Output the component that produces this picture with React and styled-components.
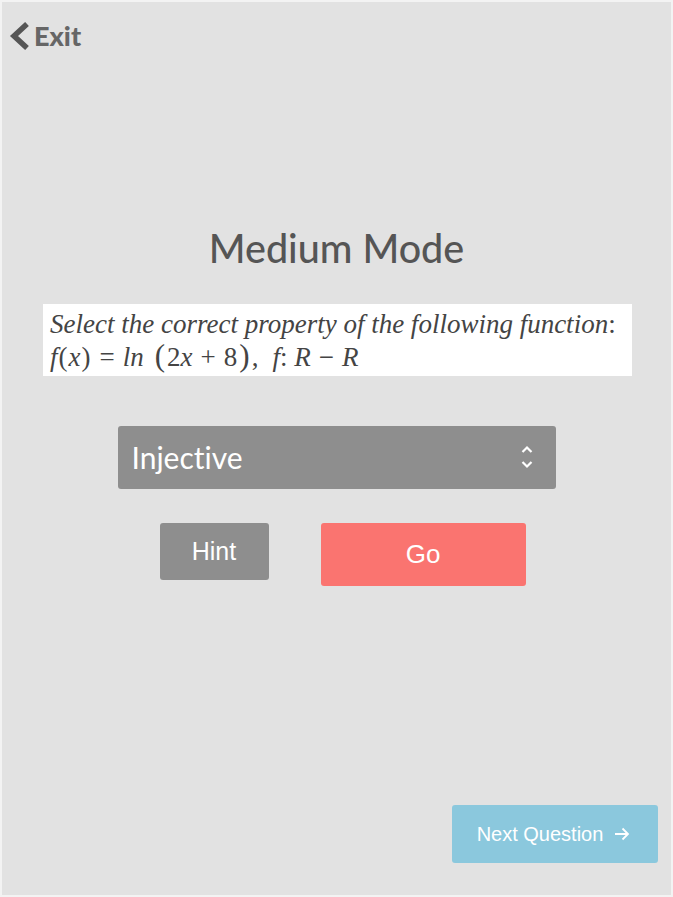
import React from 'react';
import styled, {createGlobalStyle} from 'styled-components';

const GlobalStyle = createGlobalStyle`
  html, body {
    margin: 0;
    padding: 0;
    background: #f3f3f3;
  }
  * {
    box-sizing: border-box;
  }
`;

const ExitIcon = () => (
  <svg width="24" height="28" viewBox="0 0 24 28">
    <path d="M19 2 L6 14 L19 26" fill="none" stroke="#555" strokeWidth="5.5" strokeLinejoin="miter"/>
  </svg>
);

const UpDownIcon = () => (
  <svg width="14" height="26" viewBox="0 0 14 26">
    <path d="M2.5 8 L7 3.5 L11.5 8" fill="none" stroke="white" strokeWidth="2.2"/>
    <path d="M2.5 18 L7 22.5 L11.5 18" fill="none" stroke="white" strokeWidth="2.2"/>
  </svg>
);

const ArrowIcon = () => (
  <svg width="18" height="18" viewBox="0 0 18 18">
    <path d="M2 9 H15 M9.5 3.5 L15 9 L9.5 14.5" fill="none" stroke="white" strokeWidth="1.8"/>
  </svg>
);

const App = () => {
  return (
    <Page>
      <GlobalStyle/>
      <TopBar>
        <ExitLink>
          <ExitIcon/>
          <span>Exit</span>
        </ExitLink>
      </TopBar>

      <Title>Medium Mode</Title>

      <Question>
        <QuestionLine>Select the correct property of the following function<Upright>:</Upright></QuestionLine>
        <QuestionLine>
          f<Paren>(</Paren>x<Paren>)</Paren>
          <Op>=</Op>ln<BigParen $left>(</BigParen><Upright>2</Upright>x<Op>+</Op><Upright>8</Upright><BigParen>)</BigParen><Upright>,</Upright>
          <Space/>f<Upright>: </Upright>R<Op>−</Op>R
        </QuestionLine>
      </Question>

      <SelectBox>
        <span>Injective</span>
        <UpDownIcon/>
      </SelectBox>

      <ButtonRow>
        <HintButton>Hint</HintButton>
        <GoButton>Go</GoButton>
      </ButtonRow>

      <Footer>
        <NextButton>
          Next Question
          <ArrowIcon/>
        </NextButton>
      </Footer>
    </Page>
  );
};

const Page = styled.div`
  margin: 2px;
  height: 893px;
  background: #e2e2e2;
  display: flex;
  flex-direction: column;
  align-items: center;
`;

const TopBar = styled.div`
  align-self: stretch;
  padding: 17px 0 0 6px;
`;

const ExitLink = styled.a`
  display: inline-flex;
  align-items: center;
  gap: 2px;
  color: #666;
  font-family: Lato, "Open Sans", sans-serif;
  font-weight: 900;
  font-size: 27px;
  cursor: pointer;

  svg {
    display: block;
  }
`;

const Title = styled.h1`
  margin: 170px 0 0;
  font-family: Lato, sans-serif;
  font-weight: 500;
  font-size: 39.5px;
  line-height: 48px;
  color: #555;
`;

const Question = styled.div`
  margin: 32px 0 0 2px;
  width: 589px;
  background: white;
  padding: 5px 8px 5px 7px;
  font-family: "Liberation Serif", "Times New Roman", serif;
  font-style: italic;
  font-size: 27px;
  line-height: 31px;
  color: #444;
`;

const QuestionLine = styled.div`
  white-space: nowrap;
  height: 31px;
`;

const Upright = styled.span`
  font-style: normal;
`;

const Op = styled.span`
  font-style: normal;
  margin: 0 8px;
`;

const Space = styled.span`
  display: inline-block;
  width: 14px;
`;

const Paren = styled.span`
  font-style: normal;
  margin: 0 1px;
`;

const BigParen = styled.span`
  font-style: normal;
  font-size: 31px;
  line-height: 1;
  margin: ${p => (p.$left ? '0 2px 0 11px' : '0 2px')};
`;

const SelectBox = styled.div`
  margin-top: 50px;
  width: 438px;
  height: 63px;
  background: #8e8e8e;
  border-radius: 3px;
  display: flex;
  align-items: center;
  justify-content: space-between;
  padding: 0 22px 0 14px;
  color: white;
  font-family: Lato, sans-serif;
  font-size: 30px;
  font-variant-ligatures: none;

  svg {
    display: block;
  }
`;

const ButtonRow = styled.div`
  margin-top: 34px;
  display: flex;
  align-items: flex-start;
  gap: 52px;
  padding-left: 12px;
`;

const Button = styled.button`
  border: none;
  border-radius: 3px;
  color: white;
  font-family: "Liberation Sans", Arial, sans-serif;
  cursor: pointer;
`;

const HintButton = styled(Button)`
  width: 109px;
  height: 57px;
  background: #8e8e8e;
  font-size: 25px;
`;

const GoButton = styled(Button)`
  width: 205px;
  height: 63px;
  background: #fa7470;
  font-size: 26px;
`;

const Footer = styled.div`
  margin-top: auto;
  align-self: stretch;
  display: flex;
  justify-content: flex-end;
  padding: 0 13px 32px 0;
`;

const NextButton = styled(Button)`
  width: 206px;
  height: 58px;
  background: #8bc8dd;
  font-size: 20px;
  display: flex;
  align-items: center;
  justify-content: center;
  gap: 10px;
  padding-right: 8px;

  svg {
    display: block;
  }
`;

export default App;
